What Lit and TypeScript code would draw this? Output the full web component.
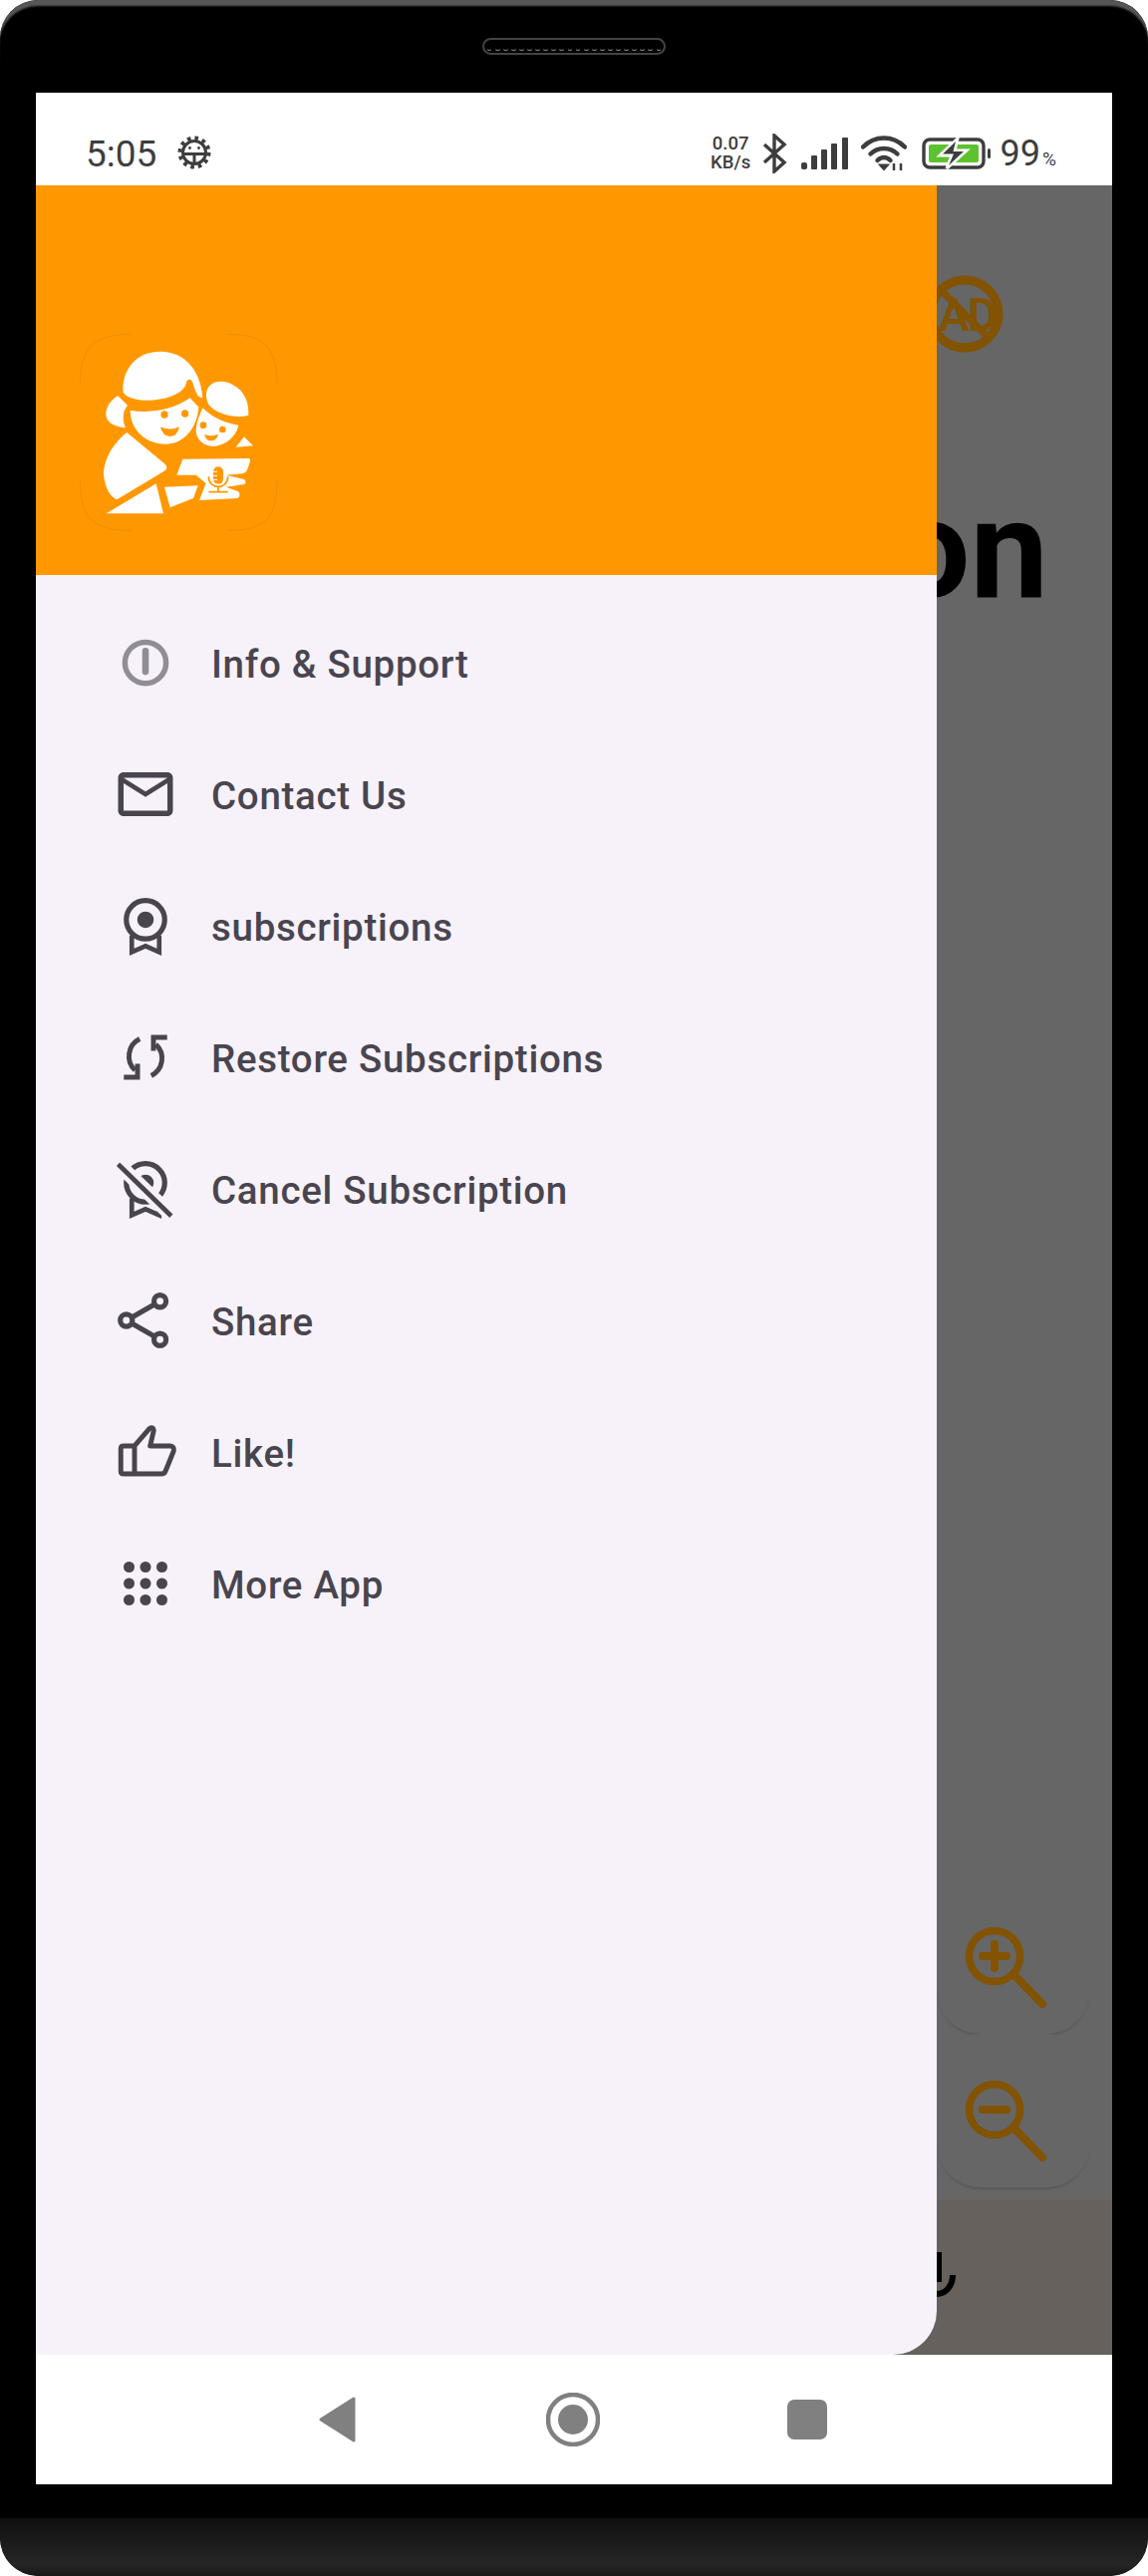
import { LitElement, html, svg, css } from "lit";
import { customElement } from "lit/decorators.js";

const badge = () => svg`<circle cx="12" cy="9.8" r="7" fill="none" stroke="currentColor" stroke-width="1.9"/><circle cx="12" cy="9.8" r="3" fill="currentColor"/><path d="M7 15.5V21.6L12 19.4L17 21.6V15.500" fill="none" stroke="currentColor" stroke-width="1.7"/>`;

const dots = [6, 12, 18].flatMap((y) => [6, 12, 18].map((x) => svg`<circle cx=${x} cy=${y} r="2"/>`));

const icons = {
  info: html`<svg viewBox="0 0 24 24" class="ic"><g opacity=".58"><circle cx="12" cy="12" r="7.5" fill="none" stroke="currentColor" stroke-width="2"/><path d="M12 7.700v7.600" stroke="currentColor" stroke-width="2.400" stroke-linecap="round"/></g></svg>`,
  mail: html`<svg viewBox="0 0 24 24" class="ic"><path fill="currentColor" d="M22 6c0-1.100-.9-2-2-2H4c-1.100 0-2 .9-2 2v12c0 1.100.9 2 2 2h16c1.100 0 2-.9 2-2V6zm-2 0l-8 5-8-5h16zm0 12H4V8l8 5 8-5v10z"/></svg>`,
  badge: html`<svg viewBox="0 0 24 24" class="ic">${badge()}</svg>`,
  sync: html`<svg viewBox="0 0 24 24" class="ic"><g fill="none" stroke="currentColor" stroke-width="1.800"><path d="M9.900 5.300A7 7 0 0 0 8.200 16.700"/><path d="M9.100 14.400V19.300H4.100"/><path d="M14.100 18.700A7 7 0 0 0 15.800 7.300"/><path d="M14.900 9.600V4.700H19.900"/></g></svg>`,
  cancel: html`<svg viewBox="0 0 24 24" class="ic"><defs><mask id="cut" maskUnits="userSpaceOnUse" x="0" y="0" width="24" height="24"><rect width="24" height="24" fill="#fff"/><path d="M1 2L23 23.100" stroke="#000" stroke-width="5.200"/></mask></defs><g mask="url(#cut)">${badge()}</g><path d="M2 3L21.400 21.900" stroke="currentColor" stroke-width="1.700"/></svg>`,
  share: html`<svg viewBox="0 0 24 24" class="ic"><g fill="none" stroke="currentColor" stroke-width="1.900"><circle cx="5" cy="12" r="2.200"/><circle cx="17.300" cy="5" r="2.200"/><circle cx="17.300" cy="19" r="2.200"/><path d="M7 10.900L15.400 6.100M7 13.100L15.400 17.900"/></g></svg>`,
  like: html`<svg viewBox="0 0 24 24" class="ic"><path fill="none" stroke="currentColor" stroke-width="1.800" stroke-linejoin="round" d="M8 9.800L13.500 3.400Q14.900 2.700 15 4.200L13.700 9.800H21Q22.600 9.900 22.300 11.600L19.300 19Q18.900 20 17.800 20H4Q3 20 3 19V10.800Q3 9.800 4 9.800H8V20"/></svg>`,
  more: html`<svg viewBox="0 0 24 24" class="ic" fill="currentColor">${dots}</svg>`,
};

const items: [string, unknown][] = [
  ["Info & Support", icons.info],
  ["Contact Us", icons.mail],
  ["subscriptions", icons.badge],
  ["Restore Subscriptions", icons.sync],
  ["Cancel Subscription", icons.cancel],
  ["Share", icons.share],
  ["Like!", icons.like],
  ["More App", icons.more],
];

@customElement("app-root")
export class AppRoot extends LitElement {
  static styles = css`
    :host { display: block; width: 1152px; height: 2585px; background: #fff; font-family: Roboto, "Liberation Sans", sans-serif; overflow: hidden; }
    .frame { height: 2585px; box-sizing: border-box; border-radius: 38px; background: #000; display: flex; flex-direction: column; position: relative; overflow: hidden; }
    .frame::before { content: ""; position: absolute; inset: 0 0 auto 0; height: 60px; border-radius: 38px 38px 0 0; box-shadow: inset 0 7px 2px -1px #565656; pointer-events: none; }
    .top-bezel { height: 93px; flex: none; display: flex; align-items: flex-start; justify-content: center; }
    .speaker { margin: 38px 0 0 0; width: 184px; height: 17px; box-sizing: border-box; border-radius: 9px; border: 2px solid #444; display: flex; align-items: center; justify-content: center; gap: 1.300px; overflow: hidden; }
    .speaker i { width: 6.800px; height: 9px; flex: none; box-sizing: border-box; border-radius: 50%; border: 1px solid transparent; border-bottom: 1.500px solid #888; }
    .screen { flex: 1; margin: 0 36px; display: flex; flex-direction: column; background: #fff; min-height: 0; }
    .status { height: 93px; flex: none; box-sizing: border-box; padding: 29px 0 0 50px; display: flex; align-items: center; color: #3d3d3d; }
    .time { font-size: 37px; line-height: 40px; width: 91px; position: relative; top: 1px; }
    .gear { width: 36px; height: 36px; display: block; margin-top: -3px; }
    .status-right { margin-left: auto; display: flex; align-items: center; padding-right: 56px; }
    .speed { display: flex; flex-direction: column; align-items: center; font-size: 18.500px; font-weight: 500; line-height: 19px; margin-right: 11px; width: 41px; }
    .bt { width: 25px; height: 40px; display: block; margin-right: 14px; }
    .sig { width: 47px; height: 32px; display: block; margin-right: 13px; }
    .wifi { width: 46px; height: 36px; display: block; margin-right: 15px; }
    .bat { width: 70px; height: 32px; display: block; margin-right: 9px; }
    .pct { font-size: 36px; line-height: 40px; position: relative; top: 3px; }
    .pct small { font-size: 19px; margin-left: 2px; }
    .stage { flex: 1; position: relative; min-height: 0; }
    .behind { height: 100%; background: #666; display: flex; flex-direction: column; align-items: flex-end; overflow: hidden; }
    .ad { width: 84px; height: 84px; display: block; margin: 87px 106px 0 0; flex: none; }
    .ad text { font: 600 46px Roboto, sans-serif; fill: #825300; letter-spacing: -2px; }
    .title { font-size: 140px; font-weight: 700; line-height: 164px; color: #000; margin: 112px 64px 0 0; }
    .spacer { flex: 1; }
    .fab { width: 154px; height: 154px; border-radius: 44px; background: #666; box-shadow: 0 4px 3px -2px rgba(0,0,0,.14); margin-right: 22px; flex: none; }
    .fab svg { display: block; width: 154px; height: 154px; }
    .band { height: 155px; width: 100%; margin-top: 13px; background: #66615c; flex: none; position: relative; }
    .mic { position: absolute; left: 850px; top: 40px; width: 120px; height: 70px; display: block; }
    .drawer { position: absolute; left: 0; top: 0; bottom: 0; width: 904px; background: #f7f2fa; border-bottom-right-radius: 44px; overflow: hidden; }
    .head { height: 391px; box-sizing: border-box; background: #ff9800; padding: 149px 0 0 44px; }
    .logo { width: 200px; height: 200px; display: block; }
    .list { padding-top: 22px; display: flex; flex-direction: column; }
    .row { height: 132px; display: flex; align-items: center; padding-left: 77px; gap: 33px; color: #49454f; }
    .ic { width: 66px; height: 66px; display: block; flex: none; }
    .label { font-size: 38.500px; font-weight: 460; letter-spacing: .7px; padding-top: 2px; }
    .nav { height: 130px; flex: none; display: flex; align-items: center; padding-left: 284px; }
    .nav svg { display: block; flex: none; }
    .back { width: 37px; height: 46px; margin-right: 191px; }
    .home { width: 54px; height: 54px; margin-right: 188px; }
    .recent { width: 40px; height: 40px; border-radius: 7px; background: #808080; flex: none; }
    .bottom-bezel { height: 92px; flex: none; display: flex; flex-direction: column; }
    .bottom-bezel div { margin-top: 34px; flex: 1; border-radius: 0 0 38px 38px; background: linear-gradient(#0f0f0f 0, #1a1a1a 40%, #262626 80%, #161616 100%); }
  `;

  render() {
    return html`<div class="frame">
      <div class="top-bezel"><div class="speaker">${Array.from({ length: 22 }, () => html`<i></i>`)}</div></div>
      <div class="screen">
        <div class="status">
          <span class="time">5:05</span>
          <svg class="gear" viewBox="0 0 36 36" fill="none" stroke="#3d3d3d">
            <circle cx="18" cy="18" r="14.500" stroke-width="4" stroke-dasharray="3.600 3.990"/>
            <circle cx="18" cy="18" r="11.500" stroke-width="3"/>
            <path d="M7 19.500H29M18 19.500V29" stroke-width="3"/>
            <circle cx="13.500" cy="13.500" r="1.400" fill="#3d3d3d" stroke="none"/><circle cx="22.500" cy="13.500" r="1.400" fill="#3d3d3d" stroke="none"/>
          </svg>
          <div class="status-right">
            <div class="speed"><span>0.07</span><span>KB/s</span></div>
            <svg class="bt" viewBox="0 0 25 40" fill="none" stroke="#3d3d3d" stroke-width="3.400"><path d="M2 11L22 29L12 38V2L22 11L2 29"/></svg>
            <svg class="sig" viewBox="0 0 47 32" fill="#3d3d3d"><rect x="0" y="25" width="6" height="7" rx="2"/><rect x="10" y="18" width="6" height="14" rx="1"/><rect x="20" y="12" width="6" height="20" rx="1"/><rect x="30" y="6" width="6" height="26" rx="1"/><rect x="41" y="0" width="6" height="32" rx="1"/></svg>
            <svg class="wifi" viewBox="0 0 46 36" fill="none" stroke="#3d3d3d" stroke-width="4.500" stroke-linecap="round"><path d="M2 11.500C14 -.5 32 -.5 44 11.500"/><path d="M9.500 18.500C17 11 29 11 36.500 18.500"/><path d="M16.500 25C20.500 21 25.500 21 29.500 25" /><path d="M19 29.500L23 34L27 29.500Z" fill="#3d3d3d" stroke-width="2"/><path d="M33 28v7M40 28v7" stroke-width="2.500" stroke-linecap="butt"/></svg>
            <svg class="bat" viewBox="0 0 70 32"><rect x="2" y="2" width="60" height="28" rx="6" fill="#fff" stroke="#3d3d3d" stroke-width="3.400"/><rect x="7" y="7" width="50" height="18" rx="2" fill="#5dc22f"/><path d="M36 1L18 18H30L25 31L45 13H33Z" fill="#fff" stroke="#fff" stroke-width="3"/><path d="M34 4L21 16.500H32L27 28L42 14H31.500Z" fill="#3d3d3d"/><rect x="66" y="11" width="3" height="10" rx="1.500" fill="#3d3d3d"/></svg>
            <span class="pct">99<small>%</small></span>
          </div>
        </div>
        <div class="stage">
          <div class="behind">
            <svg class="ad" viewBox="0 0 84 84">
              <text x="16" y="59">AD</text>
              <circle cx="42" cy="42" r="34" fill="none" stroke="#825300" stroke-width="9"/>
              <path d="M18 18L66 66" stroke="#825300" stroke-width="7"/>
            </svg>
            <div class="title">on</div>
            <div class="spacer"></div>
            <div class="fab"><svg viewBox="0 0 154 154" fill="none" stroke="#825300" stroke-width="7.500" stroke-linecap="round"><circle cx="58" cy="76" r="25.500"/><path d="M78 95L106 124" stroke-width="8"/><path d="M46 76H70M58 64V88" stroke-width="8"/></svg></div>
            <div class="fab"><svg viewBox="0 0 154 154" fill="none" stroke="#825300" stroke-width="7.500" stroke-linecap="round"><circle cx="58" cy="76" r="25.500"/><path d="M78 95L106 124" stroke-width="8"/><path d="M46 76H70" stroke-width="8"/></svg></div>
            <div class="band"><svg class="mic" viewBox="0 0 120 70" fill="none" stroke="#000"><path d="M54 12V42" stroke-width="10"/><path d="M54 54C62 54 70 47 70 35" stroke-width="6"/></svg></div>
          </div>
          <div class="drawer">
            <div class="head">
              <svg class="logo" viewBox="120 105 600 600">
                <g fill="none" stroke="#000" stroke-opacity=".22" stroke-width="1">
                  <path d="M121 260C121 150 160 106 275 106"/><path d="M565 106C680 106 714 150 714 260"/><path d="M121 545C121 660 160 697 275 697"/><path d="M565 697C680 697 714 660 714 545"/>
                </g>
                <g fill="#fff">
                  <path d="M250 275C250 200 300 158 362 158C430 158 482 205 490 296C478 300 470 285 462 258C457 238 444 238 440 255C432 288 370 308 310 305C280 302 250 292 250 275Z"/>
                  <path d="M235 292C205 308 190 345 205 365C215 380 235 385 258 388C250 370 246 340 264 320Z"/>
                  <path d="M272 335C330 345 400 335 452 298C462 310 472 320 478 325C475 380 440 437 380 437C320 437 272 395 272 335Z"/>
                  <path d="M505 270C515 248 550 240 580 258C615 275 630 310 628 350C590 362 530 345 510 320C500 305 498 285 505 270Z"/>
                  <path d="M490 328C520 358 560 375 598 380C590 420 550 445 515 443C490 440 470 420 470 395C472 370 480 350 490 328Z"/>
                  <path d="M615 415L642 442L590 446Z"/>
                  <path d="M262 402L378 498Q388 512 372 520L232 604Q200 590 192 530C192 480 225 430 262 402Z"/>
                  <path d="M200 646L350 556L372 646Z"/>
                  <path d="M375 566L476 562L462 600L392 628Z"/>
                  <path d="M430 482L628 480Q636 482 632 492L624 515Q620 524 610 526L560 530L615 543Q624 552 615 558L560 566L598 580Q606 592 596 600L480 606L500 555L470 530L412 530Z"/>
                </g>
                <g fill="#ff9800">
                  <circle cx="375" cy="348" r="11"/><circle cx="437" cy="345" r="11"/>
                  <path d="M363 385Q392 398 420 385Q414 414 392 414Q370 414 363 385Z"/>
                  <circle cx="492" cy="380" r="10"/><circle cx="550" cy="393" r="10"/>
                  <path d="M495 407Q515 416 537 407Q532 427 515 427Q500 427 495 407Z"/>
                  <rect x="522" y="505" width="30" height="52" rx="15"/>
                </g>
                <path d="M508 535C508 575 566 575 566 535M537 566V580M508 581H566" fill="none" stroke="#ff9800" stroke-width="5"/>
                <path d="M522 520h12M522 532h12M522 544h12" stroke="#fff" stroke-width="3"/>
              </svg>
            </div>
            <div class="list">
              ${items.map(([t, i]) => html`<div class="row">${i}<span class="label">${t}</span></div>`)}
            </div>
          </div>
        </div>
        <div class="nav">
          <svg class="back" viewBox="0 0 37 46" fill="#808080" stroke="#808080" stroke-width="3" stroke-linejoin="round"><path d="M35 2V44L2 23Z"/></svg>
          <svg class="home" viewBox="0 0 54 54"><circle cx="27" cy="27" r="25" fill="none" stroke="#808080" stroke-width="4.500"/><circle cx="27" cy="27" r="15" fill="#808080"/></svg>
          <div class="recent"></div>
        </div>
      </div>
      <div class="bottom-bezel"><div></div></div>
    </div>`;
  }
}
